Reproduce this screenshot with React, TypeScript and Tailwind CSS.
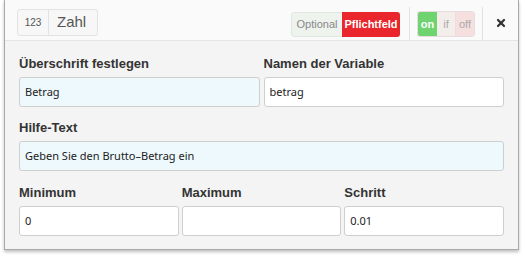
import { X } from 'lucide-react';

const Field = ({ label, value, tint }: { label: string; value: string; tint?: boolean }) => (
  <div className="flex flex-col">
    <label className="h-[18px] text-[13px] font-bold leading-[18px] text-[#333]">{label}</label>
    <div
      className={`mt-[4px] flex h-[30px] items-center rounded-[3px] border border-[#cfcfcf] px-[5px] text-[11px] text-[#222] ${
        tint ? 'bg-[#eef9fd]' : 'bg-white'
      }`}
      style={{ fontFamily: '"Noto Sans", "DejaVu Sans", sans-serif' }}
    >
      {value}
    </div>
  </div>
);

const App = () => {
  return (
    <div className="h-[257px] w-[525px] bg-white pl-[4px]" style={{ fontFamily: '"Liberation Sans", Arial, sans-serif' }}>
      <div className="w-[515px] border-x border-b border-[#a9a9a9] bg-[#f4f4f4] shadow-[0_2px_3px_rgba(0,0,0,0.25)]">
        {/* header */}
        <div className="flex h-[41px] items-stretch border-b border-[#e4e4e4] bg-[#fafafa] pl-[12px]">
          <div className="mt-[9px] flex h-[27px] items-center rounded-[3px] border border-[#e3e3e3] bg-[#f7f7f7]">
            <span className="flex h-full w-[31px] items-center justify-center border-r border-[#e3e3e3] text-[10px] text-[#555]">123</span>
            <span className="pl-[8px] pr-[11px] text-[15px] text-[#555]">Zahl</span>
          </div>
          <div className="ml-auto mt-[12px] flex h-[25px] overflow-hidden rounded-[3px] text-[11px]">
            <span className="flex w-[51px] items-center justify-center rounded-l-[3px] border border-r-0 border-[#dfe8df] bg-[#eef3ee] text-[#888]">Optional</span>
            <span className="flex w-[58px] items-center justify-center bg-[#e8262b] font-bold text-white">Pflichtfeld</span>
          </div>
          <div className="ml-[9px] mt-[7px] w-px bg-[#e2e2e2]" />
          <div className="ml-[7px] mt-[11px] flex h-[26px] overflow-hidden rounded-[3px] border border-[#e6dede] text-[11px]">
            <span className="flex w-[19px] items-center justify-center bg-[#6fd36f] font-bold text-white">on</span>
            <span className="flex w-[19px] items-center justify-center border-r border-[#eadede] bg-[#f4eeea] text-[#aaa]">if</span>
            <span className="flex w-[18px] items-center justify-center bg-[#f5dfdf] text-[#aaa]">off</span>
          </div>
          <div className="ml-[7px] mt-[7px] w-px bg-[#e2e2e2]" />
          <div className="flex w-[35px] items-center justify-center pt-[6px]">
            <X size={12} strokeWidth={4.5} className="text-[#333]" />
          </div>
        </div>
        {/* body */}
        <div className="flex flex-col gap-[12px] px-[14px] pb-[13px] pt-[14px]">
          <div className="grid grid-cols-2 gap-[4px]">
            <Field label="Überschrift festlegen" value="Betrag" tint />
            <Field label="Namen der Variable" value="betrag" />
          </div>
          <Field label="Hilfe-Text" value="Geben Sie den Brutto–Betrag ein" tint />
          <div className="mt-[1px] grid grid-cols-3 gap-[3px]">
            <Field label="Minimum" value="0" />
            <Field label="Maximum" value="" />
            <Field label="Schritt" value="0.01" />
          </div>
        </div>
      </div>
    </div>
  );
};

export default App;
